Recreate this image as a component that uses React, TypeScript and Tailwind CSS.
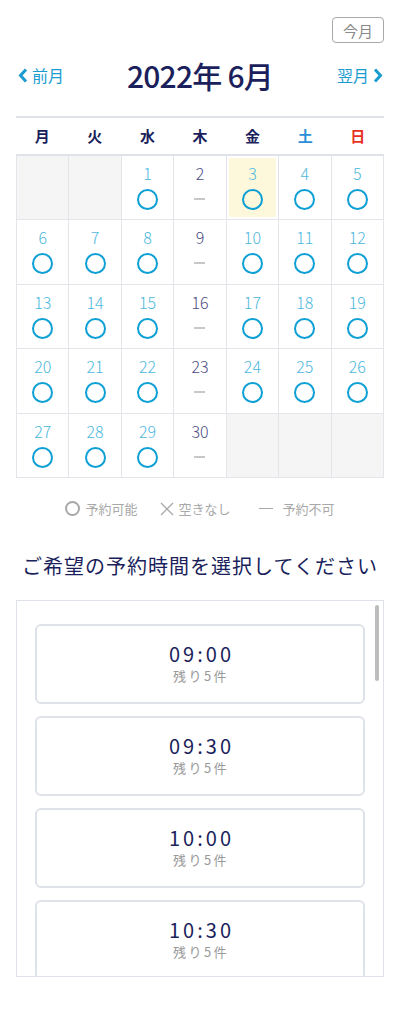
const FONT = { fontFamily: '"Noto Sans CJK JP", "Noto Sans", sans-serif' };

type Day = { d?: number; ok?: boolean; today?: boolean };

const closed = [2, 9, 16, 23, 30];
const days: Day[] = [
    {},
    {},
    ...Array.from({ length: 30 }, (_, i) => ({ d: i + 1, ok: !closed.includes(i + 1), today: i + 1 === 3 })),
    {},
    {},
    {},
];

const weekdays = [
    { label: "月", color: "text-[#1b1f5c]" },
    { label: "火", color: "text-[#1b1f5c]" },
    { label: "水", color: "text-[#1b1f5c]" },
    { label: "木", color: "text-[#1b1f5c]" },
    { label: "金", color: "text-[#1b1f5c]" },
    { label: "土", color: "text-[#2a8fd8]" },
    { label: "日", color: "text-[#e8311f]" },
];

const slots = ["09:00", "09:30", "10:00", "10:30"];

function Chevron({ dir }: { dir: "left" | "right" }) {
    return (
        <svg width="10" height="15" viewBox="0 0 10 15" className="shrink-0">
            <path
                d={dir === "left" ? "M8 1.5 L2.5 7.5 L8 13.5" : "M2 1.5 L7.5 7.5 L2 13.5"}
                fill="none"
                stroke="#1a9ccf"
                strokeWidth="3"
                strokeLinejoin="miter"
            />
        </svg>
    );
}

function DayCell({ day }: { day: Day }) {
    if (!day.d) {
        return <div className="h-[64.4px] bg-[#f5f5f5] border-r border-b border-[#e3e5ea]" />;
    }
    return (
        <div className="h-[64.4px] bg-white border-r border-b border-[#e3e5ea] p-[2px]">
            <div className={`h-full flex flex-col items-center pt-[4px] ${day.today ? "bg-[#fdf8dc]" : ""}`}>
                <span className={`text-[16px] leading-[22px] font-light ${day.ok ? "text-[#4cb8dc]" : "text-[#4a4a82]"}`}>{day.d}</span>
                {day.ok ? (
                    <div className="mt-[5px] w-[21px] h-[21px] rounded-full border-2 border-[#0ea0d4]" />
                ) : (
                    <div className="mt-[14px] w-[11px] h-[2px] bg-[#c8c8c8]" />
                )}
            </div>
        </div>
    );
}

export default function App() {
    return (
        <div className="w-[400px] bg-white px-4 pt-[17px] pb-10" style={FONT}>
            <div className="flex justify-end">
                <button className="w-[52px] h-[26px] border border-[#a8a8a8] rounded-[4px] text-[15px] leading-none text-[#8a8a8a]">今月</button>
            </div>

            <div className="flex items-center justify-between h-[40px] mt-[12px]">
                <button className="flex items-center gap-[4px] text-[#1a9ccf] text-[16px] w-[66px] pl-[2px]">
                    <Chevron dir="left" />
                    前月
                </button>
                <h1 className="text-[30px] font-medium text-[#1b1f5c] tracking-tight">2022年 6月</h1>
                <button className="flex items-center justify-end gap-[4px] text-[#1a9ccf] text-[16px] w-[66px] pr-[1px]">
                    翌月
                    <Chevron dir="right" />
                </button>
            </div>

            <div className="mt-[21px] border-t-2 border-[#dfe2e8]">
                <div className="grid grid-cols-7 h-[38px] border-b-2 border-[#dfe2e8]">
                    {weekdays.map((w) => (
                        <div key={w.label} className={`flex items-center justify-center text-[15px] font-bold ${w.color}`}>
                            {w.label}
                        </div>
                    ))}
                </div>
                <div className="grid grid-cols-7 border-l border-[#e3e5ea]">
                    {days.map((day, i) => (
                        <DayCell key={i} day={day} />
                    ))}
                </div>
            </div>

            <div className="flex items-center justify-center gap-[22px] mt-[21px] text-[13px] text-[#a8a8a8]">
                <span className="flex items-center gap-[5px]">
                    <span className="w-[15px] h-[15px] rounded-full border-2 border-[#a8a8a8]" />
                    予約可能
                </span>
                <span className="flex items-center gap-[3px]">
                    <svg width="16" height="16" viewBox="0 0 16 16">
                        <path d="M2 2 L14 14 M14 2 L2 14" stroke="#a8a8a8" strokeWidth="1.3" />
                    </svg>
                    空きなし
                </span>
                <span className="flex items-center gap-[10px] ml-[6px]">
                    <span className="w-[14px] h-[1.5px] bg-[#a8a8a8]" />
                    予約不可
                </span>
            </div>

            <h2 className="mt-[33px] text-center text-[20px] text-[#1b1f5c] tracking-[1px]">ご希望の予約時間を選択してください</h2>

            <div className="relative mt-[19px] h-[377px] border border-[#dfe2e8] overflow-hidden">
                <div className="flex flex-col gap-[12px] px-[18px] pt-[23px]">
                    {slots.map((s) => (
                        <div key={s} className="h-[80px] rounded-[6px] border-2 border-[#dfe2e8] bg-white flex flex-col items-center justify-center">
                            <span className="text-[20px] leading-[24px] text-[#1b1f5c] tracking-[3px] pl-[3px]">{s}</span>
                            <span className="text-[13px] leading-[20px] text-[#9a9a9a] tracking-[2.5px] pl-[2px]">残り5件</span>
                        </div>
                    ))}
                </div>
                <div className="absolute right-[4px] top-[4px] w-[4px] h-[76px] bg-[#bdbdbd] rounded-full" />
            </div>
        </div>
    );
}
